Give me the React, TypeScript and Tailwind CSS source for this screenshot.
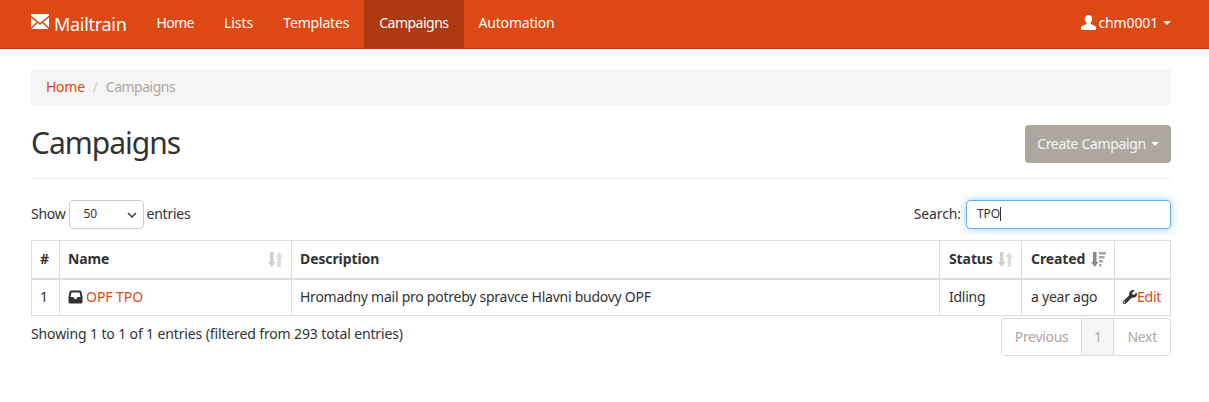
import React from "react";
import { FaWrench } from "react-icons/fa";

function Caret() {
  return <span className="inline-block ml-[5px] w-0 h-0 border-x-[4px] border-x-transparent border-t-[4px] border-t-current align-middle" />;
}

function SortBoth() {
  return (
    <svg width="15" height="15" viewBox="0 0 15 15" className="text-[#cfcfcf]" fill="currentColor">
      <path d="M2 0h3.500v10h2L3.700 15 0 10h2z" />
      <path d="M9.500 15H13V5h2L11.200 0 7.500 5h2z" opacity=".7" />
    </svg>
  );
}

function SortDown() {
  return (
    <svg width="15" height="15" viewBox="0 0 15 15" className="text-[#8a8a8a]" fill="currentColor">
      <path d="M2 0h3.500v10h2L3.700 15 0 10h2z" />
      <path d="M8 0h7v2.500H8zM8 4h5.500v2.500H8zM8 8h4v2.500H8zM8 12h2.500v2.500H8z" opacity=".75" />
    </svg>
  );
}

const th = "border border-[#ddd] border-b-[2px] px-2 text-left font-bold align-middle tracking-[-0.1px]";
const td = "border border-[#ddd] px-2 align-middle";

const links = [
  { t: "Home", c: "tracking-[-0.6px]" },
  { t: "Lists", c: "tracking-[0px]" },
  { t: "Templates", c: "tracking-[-0.18px]" },
  { t: "Campaigns", c: "tracking-[-0.5px] bg-[#ae3910]" },
  { t: "Automation", c: "tracking-[-0.2px]" },
];

export default function App() {
  return (
    <div className="min-h-[402px] bg-white text-[14px] leading-[20px] text-[#333] font-['Noto_Sans','Open_Sans',sans-serif] tracking-[-0.25px]">
      <nav className="h-[49px] bg-[#dd4814] border-b border-[#bf3e11] pl-[31px] pr-[38px] flex items-stretch justify-between text-white">
        <div className="flex items-stretch">
          <div className="flex items-center mr-[15px] text-[18px] tracking-[-0.3px] pb-[1px]">
            <svg width="18" height="16" viewBox="0 0 18 16" fill="#fff" className="mr-[5px] mb-[4px]">
              <path d="M0 0h18v1.500L9 9 0 1.500z" />
              <path d="M0 3.500 5.500 8 0 13.500z" />
              <path d="M18 3.500 12.500 8 18 13.500z" />
              <path d="M6.500 9 9 11l2.500-2 6 6H.5z" />
            </svg>
            Mailtrain
          </div>
          {links.map((l) => (
            <a key={l.t} className={`flex items-center px-[15px] pb-[2px] ${l.c}`}>{l.t}</a>
          ))}
        </div>
        <div className="flex items-center pb-[2px] tracking-[-0.15px]">
          <svg width="15" height="15" viewBox="0 0 14 14" fill="#fff" className="mr-[3px] mb-[1px]">
            <path d="M7 0c2.100 0 3.400 1.500 3.400 3.600 0 1.400-.6 2.800-1.300 3.600-.4.500-.3 1.200.3 1.500l3 1.300c.9.400 1.600 1 1.600 2V14H0v-2c0-1 .7-1.600 1.600-2l3-1.300c.6-.3.700-1 .3-1.500C4.200 6.400 3.600 5 3.600 3.600 3.600 1.500 4.900 0 7 0z" />
          </svg>
          chm0001
          <Caret />
        </div>
      </nav>

      <main className="pl-[31px] pr-[38px]">
        <div className="mt-[20px] h-[36px] bg-[#f5f5f5] rounded-[4px] px-[15px] flex items-center">
          <a className="text-[#dd4814]">Home</a>
          <span className="text-[#ccc] px-[8px]">/</span>
          <span className="text-[#aea79f] tracking-[-0.5px]">Campaigns</span>
        </div>

        <div className="mt-[20px] pb-[15px] border-b border-[#eee] flex justify-between items-start">
          <h1 className="text-[30px] leading-[36px] tracking-[-1px] text-[#333]">Campaigns</h1>
          <button className="h-[38px] w-[146px] rounded-[4px] bg-[#aea79f] text-white/90 flex items-center justify-center tracking-[-0.35px]">
            Create Campaign<Caret />
          </button>
        </div>

        <div className="mt-[20px] flex items-center justify-between h-[30px]">
          <div className="flex items-center">
            Show
            <div className="relative ml-[3px] mr-[3px] w-[75px] h-[29px] border border-[#ccc] rounded-[4px] flex items-center pl-[14px] text-[12px]">
              50
              <svg width="10" height="6" viewBox="0 0 10 6" className="absolute right-[6px] top-[11px]" fill="none" stroke="#444" strokeWidth="1.600">
                <path d="M1 1l4 4 4-4" />
              </svg>
            </div>
            entries
          </div>
          <div className="flex items-center tracking-[-0.1px]">
            Search:
            <div className="ml-[5px] w-[205px] h-[29px] border border-[#66afe9] rounded-[4px] shadow-[0_0_8px_rgba(102,175,233,0.6)] flex items-center pl-[10px] text-[12px] text-[#333]">
              TPO<span className="w-px h-[14px] bg-[#333]" />
            </div>
          </div>
        </div>

        <table className="mt-[11px] w-full border-collapse table-fixed">
          <colgroup>
            <col className="w-[28px]" />
            <col className="w-[232px]" />
            <col />
            <col className="w-[82px]" />
            <col className="w-[93px]" />
            <col className="w-[56px]" />
          </colgroup>
          <thead>
            <tr className="h-[38px]">
              <th className={th}>#</th>
              <th className={th}>
                <div className="flex items-center justify-between">Name<SortBoth /></div>
              </th>
              <th className={th}>Description</th>
              <th className={th}>
                <div className="flex items-center justify-between pl-px">Status<SortBoth /></div>
              </th>
              <th className={th}>
                <div className="flex items-center justify-between pl-px">Created<SortDown /></div>
              </th>
              <th className={th}></th>
            </tr>
          </thead>
          <tbody>
            <tr className="h-[37px]">
              <td className={td}>1</td>
              <td className={td}>
                <div className="flex items-center">
                  <svg width="15" height="14" viewBox="0 0 14 14" fill="#333" className="mr-[3px]">
                    <path fillRule="evenodd" d="M2.500 0.500h9a1.500 1.500 0 0 1 1.400 1L14 7v5a1.500 1.500 0 0 1-1.500 1.500h-11A1.500 1.500 0 0 1 0 12V7l1.100-5.500a1.500 1.500 0 0 1 1.400-1zM3 2.500 2 7h3l1 2h2l1-2h3l-1-4.500z" />
                  </svg>
                  <a className="text-[#dd4814] tracking-[-0.05px]">OPF TPO</a>
                </div>
              </td>
              <td className={td}>Hromadny mail pro potreby spravce Hlavni budovy OPF</td>
              <td className={td}><div className="pl-px">Idling</div></td>
              <td className={td}><div className="pl-px">a year ago</div></td>
              <td className={td}>
                <div className="flex items-center">
                  <FaWrench className="text-[#333] text-[14px]" />
                  <a className="text-[#dd4814]">Edit</a>
                </div>
              </td>
            </tr>
          </tbody>
        </table>

        <div className="flex justify-between items-start">
          <div className="mt-[8px] tracking-[-0.13px]">Showing 1 to 1 of 1 entries (filtered from 293 total entries)</div>
          <div className="mt-[2px] flex h-[38px] border border-[#ddd] rounded-[4px] text-[#aea79f] tracking-[-0.3px]">
            <span className="px-[13px] flex items-center">Previous</span>
            <span className="w-[33px] flex items-center justify-center bg-[#f5f5f5] border-x border-[#ddd]">1</span>
            <span className="px-[13px] flex items-center">Next</span>
          </div>
        </div>
      </main>
    </div>
  );
}
